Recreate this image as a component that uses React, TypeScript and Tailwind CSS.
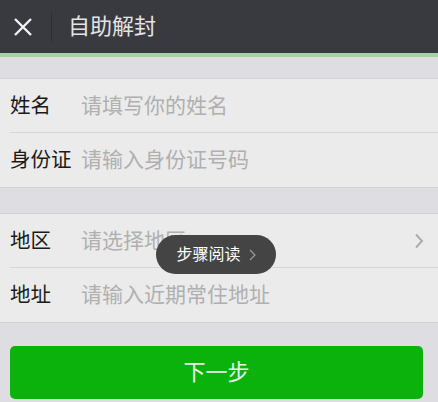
import React from 'react';

const Row = ({ label, placeholder, last, arrow }: { label: string; placeholder: string; last?: boolean; arrow?: boolean }) => (
  <div className="relative flex h-[54px] items-center pl-[10px] pr-[14px]">
    <span className="w-[71px] shrink-0 text-[20.5px] text-[#1a1a1a]">{label}</span>
    <span className="flex-1 text-[21px] text-[#b0b0b0]">{placeholder}</span>
    {arrow && (
      <svg width="10" height="16" viewBox="0 0 10 16" fill="none">
        <path d="M2 1.5L8 8L2 14.5" stroke="#acacac" strokeWidth="2" />
      </svg>
    )}
    {!last && <div className="absolute bottom-0 left-[10px] right-0 h-px bg-[#d6d6d6]" />}
  </div>
);

const App = () => {
  return (
    <div
      className="h-[402px] w-[438px] overflow-hidden bg-[#dedde2]"
      style={{ fontFamily: '"Liberation Sans", "Noto Sans CJK SC", sans-serif' }}
    >
      <div className="flex h-[53px] items-center bg-[#393a3f]">
        <div className="flex w-[51px] justify-center pr-[6px]">
          <svg width="20" height="20" viewBox="0 0 20 20">
            <path d="M2 2L18 18M18 2L2 18" stroke="#f2f2f2" strokeWidth="2.4" />
          </svg>
        </div>
        <div className="h-[30px] w-px bg-[#2e2f33]" />
        <span className="ml-[16px] text-[22px] text-[#e4e4e4]">自助解封</span>
      </div>
      <div className="h-[4px] bg-[#a6d49f]" />

      <div className="mt-[21px] border-y border-[#d2d2d2] bg-[#ebebeb]">
        <Row label="姓名" placeholder="请填写你的姓名" />
        <Row label="身份证" placeholder="请输入身份证号码" last />
      </div>

      <div className="relative mt-[25px] border-y border-[#d2d2d2] bg-[#ebebeb]">
        <Row label="地区" placeholder="请选择地区" arrow />
        <Row label="地址" placeholder="请输入近期常住地址" last />
        <div className="absolute left-[156px] top-[21px] flex h-[39px] w-[120px] items-center justify-center gap-[8px] rounded-full bg-[#444444]">
          <span className="text-[16px] text-white">步骤阅读</span>
          <svg width="7" height="12" viewBox="0 0 7 12" fill="none">
            <path d="M1 1L6 6L1 11" stroke="#9a9a9a" strokeWidth="1.2" />
          </svg>
        </div>
      </div>

      <div className="px-[10px] pt-[23px]">
        <button className="flex h-[53px] w-[413px] items-center justify-center rounded-[5px] bg-[#0bb20c] text-[22px] text-[#e8f6e8]">
          下一步
        </button>
      </div>
    </div>
  );
};

export default App;
